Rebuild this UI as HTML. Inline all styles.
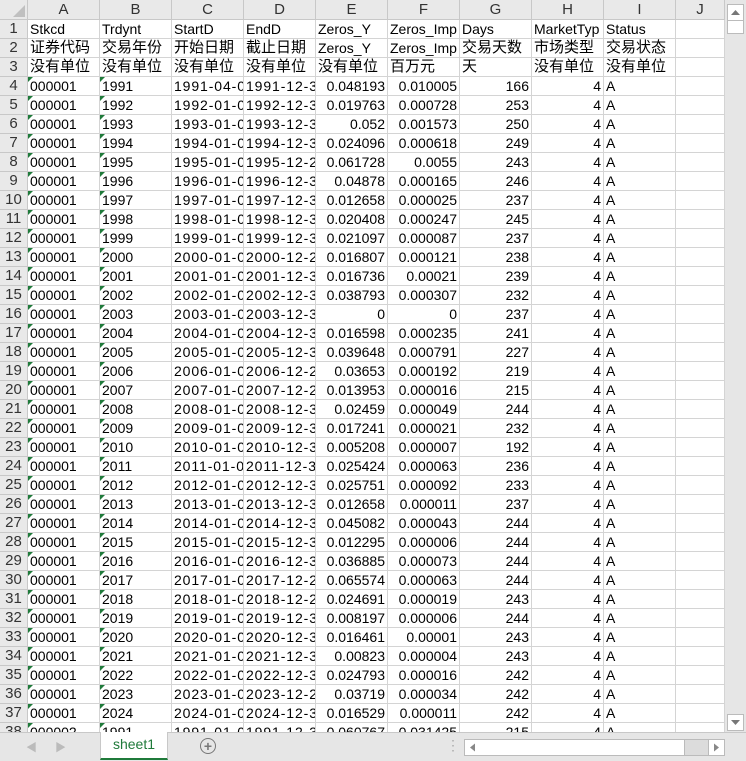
<!DOCTYPE html>
<html><head><meta charset="utf-8"><style>
body{margin:0;width:746px;height:760px;overflow:hidden;background:#e6e6e6;font-family:"Liberation Sans","Noto Sans CJK SC",sans-serif;}
#sheet{position:absolute;left:0;top:0;width:725px;height:732px;overflow:hidden;background:#fff;}
.g{display:grid;grid-template-columns:28px repeat(9,72px) 49px;grid-template-rows:20px;grid-auto-rows:19px;}
.g>div{box-sizing:border-box;border-right:1px solid #d4d4d4;border-bottom:1px solid #d4d4d4;font-size:14px;line-height:18px;white-space:nowrap;overflow:hidden;padding:0 2px;position:relative;color:#000;}
.g>div.h{background:#e9e9e9;text-align:center;color:#333;border-color:#c8c8c8;padding:0;font-size:15px;}
.g>div.c{background:#e9e9e9;text-align:center;line-height:20px;color:#333;border-color:#c8c8c8;font-size:15px;}
.g>div.k{font-size:15px;}
.g>div.r{text-align:right;}
.g>div.t::before{content:"";position:absolute;left:0;top:0;border-top:5px solid #1f7a3a;border-right:5px solid transparent;}
.g>div.d{letter-spacing:0.9px;text-overflow:clip;}
#vs{position:absolute;left:725px;top:0;width:21px;height:732px;background:#e6e6e6;}
.btn{position:absolute;box-sizing:border-box;background:#fff;border:1px solid #bbb;}
#tabbar{position:absolute;left:0;top:732px;width:746px;height:28px;background:#e6e6e6;border-top:1px solid #c8c8c8;}
</style></head><body>
<div id="sheet"><div class="g">
<div class="c" style="background:#e9e9e9"><svg width="12" height="12" style="position:absolute;right:2px;bottom:2px"><polygon points="12,0 12,12 0,12" fill="#c0c0c0"/></svg></div><div class="c">A</div><div class="c">B</div><div class="c">C</div><div class="c">D</div><div class="c">E</div><div class="c">F</div><div class="c">G</div><div class="c">H</div><div class="c">I</div><div class="c">J</div>
<div class="h">1</div><div>Stkcd</div><div>Trdynt</div><div>StartD</div><div>EndD</div><div>Zeros_Y</div><div>Zeros_Imp</div><div>Days</div><div>MarketTyp</div><div>Status</div><div></div>
<div class="h">2</div><div class="k">证券代码</div><div class="k">交易年份</div><div class="k">开始日期</div><div class="k">截止日期</div><div>Zeros_Y</div><div>Zeros_Imp</div><div class="k">交易天数</div><div class="k">市场类型</div><div class="k">交易状态</div><div></div>
<div class="h">3</div><div class="k">没有单位</div><div class="k">没有单位</div><div class="k">没有单位</div><div class="k">没有单位</div><div class="k">没有单位</div><div class="k">百万元</div><div class="k">天</div><div class="k">没有单位</div><div class="k">没有单位</div><div></div>
<div class="h">4</div><div class="t">000001</div><div class="t">1991</div><div class="d">1991-04-0</div><div class="d">1991-12-3</div><div class="r">0.048193</div><div class="r">0.010005</div><div class="r">166</div><div class="r">4</div><div>A</div><div></div>
<div class="h">5</div><div class="t">000001</div><div class="t">1992</div><div class="d">1992-01-0</div><div class="d">1992-12-3</div><div class="r">0.019763</div><div class="r">0.000728</div><div class="r">253</div><div class="r">4</div><div>A</div><div></div>
<div class="h">6</div><div class="t">000001</div><div class="t">1993</div><div class="d">1993-01-0</div><div class="d">1993-12-3</div><div class="r">0.052</div><div class="r">0.001573</div><div class="r">250</div><div class="r">4</div><div>A</div><div></div>
<div class="h">7</div><div class="t">000001</div><div class="t">1994</div><div class="d">1994-01-0</div><div class="d">1994-12-3</div><div class="r">0.024096</div><div class="r">0.000618</div><div class="r">249</div><div class="r">4</div><div>A</div><div></div>
<div class="h">8</div><div class="t">000001</div><div class="t">1995</div><div class="d">1995-01-0</div><div class="d">1995-12-2</div><div class="r">0.061728</div><div class="r">0.0055</div><div class="r">243</div><div class="r">4</div><div>A</div><div></div>
<div class="h">9</div><div class="t">000001</div><div class="t">1996</div><div class="d">1996-01-0</div><div class="d">1996-12-3</div><div class="r">0.04878</div><div class="r">0.000165</div><div class="r">246</div><div class="r">4</div><div>A</div><div></div>
<div class="h">10</div><div class="t">000001</div><div class="t">1997</div><div class="d">1997-01-0</div><div class="d">1997-12-3</div><div class="r">0.012658</div><div class="r">0.000025</div><div class="r">237</div><div class="r">4</div><div>A</div><div></div>
<div class="h">11</div><div class="t">000001</div><div class="t">1998</div><div class="d">1998-01-0</div><div class="d">1998-12-3</div><div class="r">0.020408</div><div class="r">0.000247</div><div class="r">245</div><div class="r">4</div><div>A</div><div></div>
<div class="h">12</div><div class="t">000001</div><div class="t">1999</div><div class="d">1999-01-0</div><div class="d">1999-12-3</div><div class="r">0.021097</div><div class="r">0.000087</div><div class="r">237</div><div class="r">4</div><div>A</div><div></div>
<div class="h">13</div><div class="t">000001</div><div class="t">2000</div><div class="d">2000-01-0</div><div class="d">2000-12-2</div><div class="r">0.016807</div><div class="r">0.000121</div><div class="r">238</div><div class="r">4</div><div>A</div><div></div>
<div class="h">14</div><div class="t">000001</div><div class="t">2001</div><div class="d">2001-01-0</div><div class="d">2001-12-3</div><div class="r">0.016736</div><div class="r">0.00021</div><div class="r">239</div><div class="r">4</div><div>A</div><div></div>
<div class="h">15</div><div class="t">000001</div><div class="t">2002</div><div class="d">2002-01-0</div><div class="d">2002-12-3</div><div class="r">0.038793</div><div class="r">0.000307</div><div class="r">232</div><div class="r">4</div><div>A</div><div></div>
<div class="h">16</div><div class="t">000001</div><div class="t">2003</div><div class="d">2003-01-0</div><div class="d">2003-12-3</div><div class="r">0</div><div class="r">0</div><div class="r">237</div><div class="r">4</div><div>A</div><div></div>
<div class="h">17</div><div class="t">000001</div><div class="t">2004</div><div class="d">2004-01-0</div><div class="d">2004-12-3</div><div class="r">0.016598</div><div class="r">0.000235</div><div class="r">241</div><div class="r">4</div><div>A</div><div></div>
<div class="h">18</div><div class="t">000001</div><div class="t">2005</div><div class="d">2005-01-0</div><div class="d">2005-12-3</div><div class="r">0.039648</div><div class="r">0.000791</div><div class="r">227</div><div class="r">4</div><div>A</div><div></div>
<div class="h">19</div><div class="t">000001</div><div class="t">2006</div><div class="d">2006-01-0</div><div class="d">2006-12-2</div><div class="r">0.03653</div><div class="r">0.000192</div><div class="r">219</div><div class="r">4</div><div>A</div><div></div>
<div class="h">20</div><div class="t">000001</div><div class="t">2007</div><div class="d">2007-01-0</div><div class="d">2007-12-2</div><div class="r">0.013953</div><div class="r">0.000016</div><div class="r">215</div><div class="r">4</div><div>A</div><div></div>
<div class="h">21</div><div class="t">000001</div><div class="t">2008</div><div class="d">2008-01-0</div><div class="d">2008-12-3</div><div class="r">0.02459</div><div class="r">0.000049</div><div class="r">244</div><div class="r">4</div><div>A</div><div></div>
<div class="h">22</div><div class="t">000001</div><div class="t">2009</div><div class="d">2009-01-0</div><div class="d">2009-12-3</div><div class="r">0.017241</div><div class="r">0.000021</div><div class="r">232</div><div class="r">4</div><div>A</div><div></div>
<div class="h">23</div><div class="t">000001</div><div class="t">2010</div><div class="d">2010-01-0</div><div class="d">2010-12-3</div><div class="r">0.005208</div><div class="r">0.000007</div><div class="r">192</div><div class="r">4</div><div>A</div><div></div>
<div class="h">24</div><div class="t">000001</div><div class="t">2011</div><div class="d">2011-01-0</div><div class="d">2011-12-3</div><div class="r">0.025424</div><div class="r">0.000063</div><div class="r">236</div><div class="r">4</div><div>A</div><div></div>
<div class="h">25</div><div class="t">000001</div><div class="t">2012</div><div class="d">2012-01-0</div><div class="d">2012-12-3</div><div class="r">0.025751</div><div class="r">0.000092</div><div class="r">233</div><div class="r">4</div><div>A</div><div></div>
<div class="h">26</div><div class="t">000001</div><div class="t">2013</div><div class="d">2013-01-0</div><div class="d">2013-12-3</div><div class="r">0.012658</div><div class="r">0.000011</div><div class="r">237</div><div class="r">4</div><div>A</div><div></div>
<div class="h">27</div><div class="t">000001</div><div class="t">2014</div><div class="d">2014-01-0</div><div class="d">2014-12-3</div><div class="r">0.045082</div><div class="r">0.000043</div><div class="r">244</div><div class="r">4</div><div>A</div><div></div>
<div class="h">28</div><div class="t">000001</div><div class="t">2015</div><div class="d">2015-01-0</div><div class="d">2015-12-3</div><div class="r">0.012295</div><div class="r">0.000006</div><div class="r">244</div><div class="r">4</div><div>A</div><div></div>
<div class="h">29</div><div class="t">000001</div><div class="t">2016</div><div class="d">2016-01-0</div><div class="d">2016-12-3</div><div class="r">0.036885</div><div class="r">0.000073</div><div class="r">244</div><div class="r">4</div><div>A</div><div></div>
<div class="h">30</div><div class="t">000001</div><div class="t">2017</div><div class="d">2017-01-0</div><div class="d">2017-12-2</div><div class="r">0.065574</div><div class="r">0.000063</div><div class="r">244</div><div class="r">4</div><div>A</div><div></div>
<div class="h">31</div><div class="t">000001</div><div class="t">2018</div><div class="d">2018-01-0</div><div class="d">2018-12-2</div><div class="r">0.024691</div><div class="r">0.000019</div><div class="r">243</div><div class="r">4</div><div>A</div><div></div>
<div class="h">32</div><div class="t">000001</div><div class="t">2019</div><div class="d">2019-01-0</div><div class="d">2019-12-3</div><div class="r">0.008197</div><div class="r">0.000006</div><div class="r">244</div><div class="r">4</div><div>A</div><div></div>
<div class="h">33</div><div class="t">000001</div><div class="t">2020</div><div class="d">2020-01-0</div><div class="d">2020-12-3</div><div class="r">0.016461</div><div class="r">0.00001</div><div class="r">243</div><div class="r">4</div><div>A</div><div></div>
<div class="h">34</div><div class="t">000001</div><div class="t">2021</div><div class="d">2021-01-0</div><div class="d">2021-12-3</div><div class="r">0.00823</div><div class="r">0.000004</div><div class="r">243</div><div class="r">4</div><div>A</div><div></div>
<div class="h">35</div><div class="t">000001</div><div class="t">2022</div><div class="d">2022-01-0</div><div class="d">2022-12-3</div><div class="r">0.024793</div><div class="r">0.000016</div><div class="r">242</div><div class="r">4</div><div>A</div><div></div>
<div class="h">36</div><div class="t">000001</div><div class="t">2023</div><div class="d">2023-01-0</div><div class="d">2023-12-2</div><div class="r">0.03719</div><div class="r">0.000034</div><div class="r">242</div><div class="r">4</div><div>A</div><div></div>
<div class="h">37</div><div class="t">000001</div><div class="t">2024</div><div class="d">2024-01-0</div><div class="d">2024-12-3</div><div class="r">0.016529</div><div class="r">0.000011</div><div class="r">242</div><div class="r">4</div><div>A</div><div></div>
<div class="h">38</div><div class="t">000002</div><div class="t">1991</div><div class="d">1991-01-0</div><div class="d">1991-12-3</div><div class="r">0.060767</div><div class="r">0.031425</div><div class="r">215</div><div class="r">4</div><div>A</div><div></div>
</div></div>
<div id="vs">
<div class="btn" style="left:2px;top:4px;width:17px;height:17px"><svg width="15" height="15"><polygon points="3,10 12,10 7.5,5" fill="#777"/></svg></div>
<div class="btn" style="left:2px;top:20px;width:17px;height:14px"></div>
<div class="btn" style="left:2px;top:714px;width:17px;height:17px"><svg width="15" height="15"><polygon points="3,5 12,5 7.5,10" fill="#777"/></svg></div>
</div>
<div id="tabbar">
<span style="position:absolute;left:26px;top:6px;color:#bbb;font-size:11px">&#9664;</span>
<span style="position:absolute;left:55px;top:6px;color:#bbb;font-size:11px">&#9654;</span>
<div style="position:absolute;left:100px;top:-1px;width:66px;height:26px;background:#fff;border-left:1px solid #c8c8c8;border-right:1px solid #c8c8c8;border-bottom:2px solid #1f7a3a;text-align:center;line-height:25px;font-size:14px;color:#1f7a3a">sheet1</div>
<div style="position:absolute;left:200px;top:5px;width:14px;height:14px;border:1.5px solid #777;border-radius:50%;text-align:center;line-height:14px;font-size:14px;color:#777;font-weight:bold">+</div>
<span style="position:absolute;left:446px;top:4px;color:#aaa;font-size:14px">&#8942;</span>
<div style="position:absolute;left:464px;top:6px;width:261px;height:17px;background:#dcdcdc;border:1px solid #bbb;box-sizing:border-box">
<div style="position:absolute;left:0;top:0;width:15px;height:15px;background:#fff;border-right:1px solid #bbb"><svg width="15" height="15"><polygon points="10,3.5 10,11.5 5,7.5" fill="#888"/></svg></div>
<div style="position:absolute;left:15px;top:0;width:204px;height:15px;background:#fff;border-right:1px solid #bbb"></div>
<div style="position:absolute;right:0;top:0;width:15px;height:15px;background:#fff;border-left:1px solid #bbb"><svg width="15" height="15"><polygon points="5,3.5 5,11.5 10,7.5" fill="#888"/></svg></div>
</div>
</div>
</body></html>
